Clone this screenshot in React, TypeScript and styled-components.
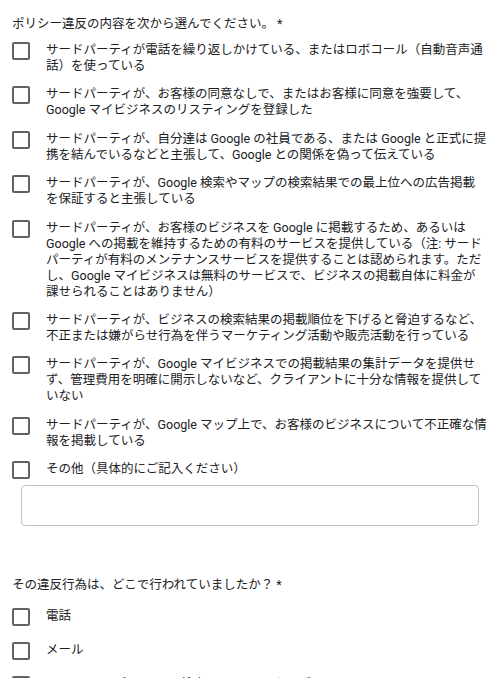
import styled, { createGlobalStyle } from "styled-components";

const GlobalStyle = createGlobalStyle`
  body {
    margin: 0;
    background: #ffffff;
    font-family: Roboto, "Noto Sans CJK JP", sans-serif;
  }
`;

// each option is kept as the lines the form shows
const violations = [
  ["サードパーティが電話を繰り返しかけている、またはロボコール（自動音声通", "話）を使っている"],
  [
    "サードパーティが、お客様の同意なしで、またはお客様に同意を強要して、",
    "Google マイビジネスのリスティングを登録した",
  ],
  [
    "サードパーティが、自分達は Google の社員である、または Google と正式に提",
    "携を結んでいるなどと主張して、Google との関係を偽って伝えている",
  ],
  ["サードパーティが、Google 検索やマップの検索結果での最上位への広告掲載", "を保証すると主張している"],
  [
    "サードパーティが、お客様のビジネスを Google に掲載するため、あるいは",
    "Google への掲載を維持するための有料のサービスを提供している（注: サード",
    "パーティが有料のメンテナンスサービスを提供することは認められます。ただ",
    "し、Google マイビジネスは無料のサービスで、ビジネスの掲載自体に料金が",
    "課せられることはありません）",
  ],
  [
    "サードパーティが、ビジネスの検索結果の掲載順位を下げると脅迫するなど、",
    "不正または嫌がらせ行為を伴うマーケティング活動や販売活動を行っている",
  ],
  [
    "サードパーティが、Google マイビジネスでの掲載結果の集計データを提供せ",
    "ず、管理費用を明確に開示しないなど、クライアントに十分な情報を提供して",
    "いない",
  ],
  ["サードパーティが、Google マップ上で、お客様のビジネスについて不正確な情", "報を掲載している"],
  ["その他（具体的にご記入ください）"],
];

const places = [["電話"], ["メール"], ["Google マップ、Google 検索、Google のウェブサイト"]];

function OptionList({ items, gap }: { items: string[][]; gap: number }) {
  return (
    <Options $gap={gap}>
      {items.map((lines) => (
        <Option key={lines[0]}>
          <Box />
          <Label>
            {lines.map((line, i) => (
              <Line key={i}>{line}</Line>
            ))}
          </Label>
        </Option>
      ))}
    </Options>
  );
}

export default function App() {
  return (
    <>
      <GlobalStyle />
      <Page>
        <Question>
          <Title $below={10}>ポリシー違反の内容を次から選んでください。 *</Title>
          <OptionList items={violations} gap={12.4} />
          <OtherInput />
        </Question>

        <Question $top={51}>
          <Title $below={15}>その違反行為は、どこで行われていましたか？ *</Title>
          <OptionList items={places} gap={16} />
        </Question>
      </Page>
    </>
  );
}

const Page = styled.div`
  display: flex;
  flex-direction: column;
  padding: 16px 6px 0 12px;
  color: #202124;
  font-size: 12.5px;
  line-height: 16px;
`;

const Question = styled.section<{ $top?: number }>`
  display: flex;
  flex-direction: column;
  margin-top: ${(p) => p.$top ?? 0}px;
`;

const Title = styled.div<{ $below: number }>`
  margin-bottom: ${(p) => p.$below}px;
`;

const Options = styled.div<{ $gap: number }>`
  display: flex;
  flex-direction: column;
  gap: ${(p) => p.$gap}px;
`;

const Option = styled.label`
  display: flex;
  align-items: flex-start;
  gap: 16px;
`;

const Box = styled.span`
  flex: none;
  width: 18px;
  height: 18px;
  box-sizing: border-box;
  border: 2px solid #5f6368;
  border-radius: 2px;
`;

const Label = styled.span`
  flex: 1;
  min-width: 0;
  display: flex;
  flex-direction: column;
`;

const Line = styled.span`
  white-space: nowrap;
`;

const OtherInput = styled.div`
  margin: 6px 0 0 9px;
  width: 458px;
  height: 41px;
  box-sizing: border-box;
  border: 1px solid #bdc1c6;
  border-radius: 4px;
`;
